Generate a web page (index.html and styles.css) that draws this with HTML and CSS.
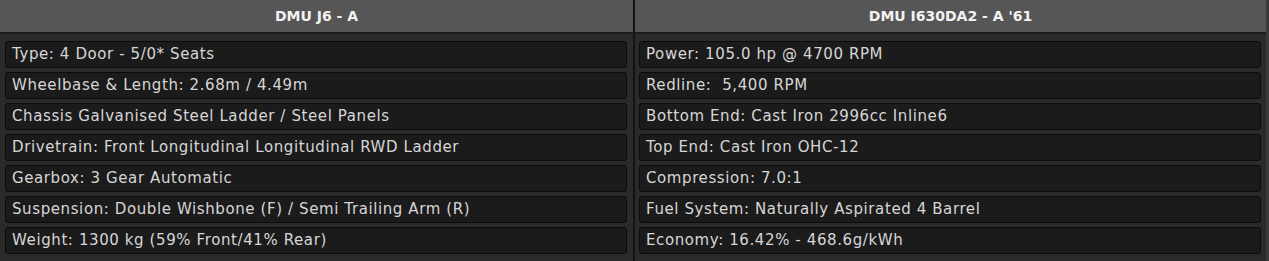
FILE: index.html
```html
<!DOCTYPE html>
<html lang="en">

<head>
    <meta charset="UTF-8">
    <meta name="viewport" content="width=device-width, initial-scale=1.0">
    <title>Car Comparison</title>
    <link rel="stylesheet" href="styles.css">
</head>

<body>
    <div class="compare">
        <div class="car">
            <div class="car-title">DMU J6 - A</div>
            <div class="specs">
                <div class="spec">Type: 4 Door - 5/0* Seats</div>
                <div class="spec">Wheelbase &amp; Length: 2.68m / 4.49m</div>
                <div class="spec">Chassis Galvanised Steel Ladder / Steel Panels</div>
                <div class="spec">Drivetrain: Front Longitudinal Longitudinal RWD Ladder</div>
                <div class="spec">Gearbox: 3 Gear Automatic</div>
                <div class="spec">Suspension: Double Wishbone (F) / Semi Trailing Arm (R)</div>
                <div class="spec">Weight: 1300 kg (59% Front/41% Rear)</div>
            </div>
        </div>
        <div class="car">
            <div class="car-title">DMU I630DA2 - A '61</div>
            <div class="specs">
                <div class="spec">Power: 105.0 hp @ 4700 RPM</div>
                <div class="spec">Redline:&nbsp; 5,400 RPM</div>
                <div class="spec">Bottom End: Cast Iron 2996cc Inline6</div>
                <div class="spec">Top End: Cast Iron OHC-12</div>
                <div class="spec">Compression: 7.0:1</div>
                <div class="spec">Fuel System: Naturally Aspirated 4 Barrel</div>
                <div class="spec">Economy: 16.42% - 468.6g/kWh</div>
            </div>
        </div>
    </div>
</body>

</html>
```

FILE: styles.css
```css
body {
    margin: 0;
    background-color: #2b2b2b;
    font-family: "DejaVu Sans", sans-serif;
    color: #d6d6d6;
}

.compare {
    display: grid;
    grid-template-columns: 633px 631px;
    column-gap: 2px;
    background-color: #141414;
    border-right: 3px solid #3a3a3a;
    height: 261px;
}

.car {
    background-color: #2a2a2a;
}

.car-title {
    height: 32px;
    line-height: 32px;
    background-color: #565656;
    border-bottom: 2px solid #1a1a1a;
    color: #f2f2f2;
    font-size: 14px;
    font-weight: bold;
    text-align: center;
}

.specs {
    display: flex;
    flex-direction: column;
    gap: 4px;
    padding: 7px 6px 0 5px;
}

.car + .car .specs {
    padding: 7px 5px 0 4px;
}

.spec {
    height: 25px;
    line-height: 25px;
    padding-left: 6px;
    background-color: #1c1b1c;
    border: 1px solid #0b0b0b;
    border-radius: 3px;
    font-size: 15px;
    letter-spacing: 0.6px;
    white-space: nowrap;
}
```
